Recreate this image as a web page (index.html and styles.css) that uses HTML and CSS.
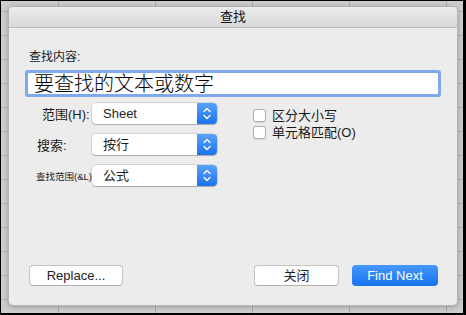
FILE: index.html
```html
<!DOCTYPE html>
<html lang="zh">
<head>
<meta charset="utf-8">
<link rel="stylesheet" href="styles.css">
</head>
<body>
<div class="screen">
  <div class="dialog">
    <div class="titlebar">查找</div>
    <div class="content">
      <div class="find-label">查找内容:</div>
      <div class="field">要查找的文本或数字</div>
      <div class="options">
        <div class="selects">
          <div class="sel-label l1">范围(H):</div>
          <div class="popup"><span class="popup-text">Sheet</span><span class="stepper"><svg width="20" height="21" viewBox="0 0 20 21"><path d="M7 8.5 L10 5.5 L13 8.5 M7 12.5 L10 15.5 L13 12.5" fill="none" stroke="#fff" stroke-width="1.4" stroke-linecap="round" stroke-linejoin="round"/></svg></span></div>
          <div class="sel-label l2">搜索:</div>
          <div class="popup"><span class="popup-text">按行</span><span class="stepper"><svg width="20" height="21" viewBox="0 0 20 21"><path d="M7 8.5 L10 5.5 L13 8.5 M7 12.5 L10 15.5 L13 12.5" fill="none" stroke="#fff" stroke-width="1.4" stroke-linecap="round" stroke-linejoin="round"/></svg></span></div>
          <div class="sel-label l3">查找范围(&amp;L):</div>
          <div class="popup"><span class="popup-text">公式</span><span class="stepper"><svg width="20" height="21" viewBox="0 0 20 21"><path d="M7 8.5 L10 5.5 L13 8.5 M7 12.5 L10 15.5 L13 12.5" fill="none" stroke="#fff" stroke-width="1.4" stroke-linecap="round" stroke-linejoin="round"/></svg></span></div>
        </div>
        <div class="checks">
          <label class="check"><span class="box"></span>区分大小写</label>
          <label class="check"><span class="box"></span>单元格匹配(O)</label>
        </div>
      </div>
      <div class="buttons">
        <div class="btn replace">Replace...</div>
        <div class="spacer"></div>
        <div class="btn close">关闭</div>
        <div class="btn primary">Find Next</div>
      </div>
    </div>
  </div>
</div>
</body>
</html>
```
FILE: styles.css
```css
html, body {
  margin: 0;
  padding: 0;
  background: #000;
}
body {
  font-family: "Liberation Sans", "Noto Sans CJK SC", sans-serif;
  color: #1a1a1a;
}
.screen {
  width: 466px;
  height: 315px;
  box-sizing: border-box;
  border-style: solid;
  border-color: #000;
  border-width: 1px 3px 2px 1px;
  padding: 5px 0 0 7px;
  background-color: #cdcdcd;
  background-image:
    linear-gradient(to right, #a9a9a9 1px, transparent 1px),
    linear-gradient(to bottom, #b3b3b3 1px, transparent 1px);
  background-size: 97px 100%, 100% 24px;
  background-position: 57px 0, 0 10px;
}
.dialog {
  width: 450px;
  height: 300px;
  box-sizing: border-box;
  border: 1px solid #b4b4b4;
  border-radius: 5px;
  background: #ececec;
  box-shadow: 0 1px 5px rgba(0, 0, 0, 0.25);
  display: flex;
  flex-direction: column;
  overflow: hidden;
}
.titlebar {
  height: 21px;
  box-sizing: border-box;
  border-bottom: 1px solid #bcbcbc;
  background: linear-gradient(#ebebeb, #d9d9d9);
  text-align: center;
  font-size: 13px;
  line-height: 20px;
  color: #111;
}
.content {
  flex: 1;
  display: flex;
  flex-direction: column;
  padding: 0 19px 19px 19px;
}
.find-label {
  margin: 21px 0 0 1px;
  font-size: 12px;
  line-height: 16px;
}
.field {
  margin-top: 8px;
  height: 21px;
  background: #fff;
  border-radius: 1px;
  box-shadow: 0 0 0 3px #7ea9ee;
  font-size: 20px;
  font-weight: 300;
  line-height: 22px;
  padding-left: 6px;
  color: #000;
  white-space: nowrap;
}
.options {
  margin-top: 9px;
  display: flex;
}
.selects {
  display: grid;
  grid-template-columns: 64px 125px;
  grid-auto-rows: 21px;
  row-gap: 10px;
  align-items: center;
}
.sel-label {
  font-size: 13px;
  white-space: nowrap;
}
.l1 { padding-left: 14px; }
.l2 { padding-left: 9px; }
.l3 { padding-left: 8px; font-size: 9.5px; }
.popup {
  height: 21px;
  box-sizing: border-box;
  display: flex;
  background: #fff;
  border-radius: 4px;
  box-shadow: 0 0 0 0.5px rgba(0,0,0,0.2), 0 1px 1px rgba(0,0,0,0.2);
  overflow: hidden;
}
.popup-text {
  flex: 1;
  padding-left: 11px;
  font-size: 13px;
  line-height: 21px;
  color: #1e1e1e;
}
.stepper {
  width: 20px;
  height: 21px;
  background: linear-gradient(#5aa2fc, #1b73ef);
  display: flex;
}
.checks {
  margin-left: 36px;
  padding-top: 2px;
  display: flex;
  flex-direction: column;
}
.check {
  display: flex;
  align-items: center;
  height: 20px;
  font-size: 13px;
  line-height: 13px;
  margin-top: -3px;
}
.check:first-child { margin-top: 0; }
.box {
  width: 13px;
  height: 13px;
  box-sizing: border-box;
  background: #fff;
  border: 1px solid #b0b0b0;
  border-radius: 3px;
  margin-right: 6px;
  box-shadow: 0 0.5px 1px rgba(0,0,0,0.1);
}
.buttons {
  margin-top: auto;
  display: flex;
  gap: 13px;
}
.spacer { flex: 1; }
.btn {
  height: 21px;
  box-sizing: border-box;
  border-radius: 4px;
  background: #fff;
  border: 1px solid #c4c4c4;
  border-bottom-color: #b2b2b2;
  font-size: 13px;
  line-height: 19px;
  text-align: center;
  color: #222;
}
.replace { width: 94px; margin-left: 1px; }
.close { width: 85px; }
.primary {
  width: 86px;
  border: none;
  background: linear-gradient(#4598fc, #1672f2);
  color: #fff;
  line-height: 21px;
}
```
